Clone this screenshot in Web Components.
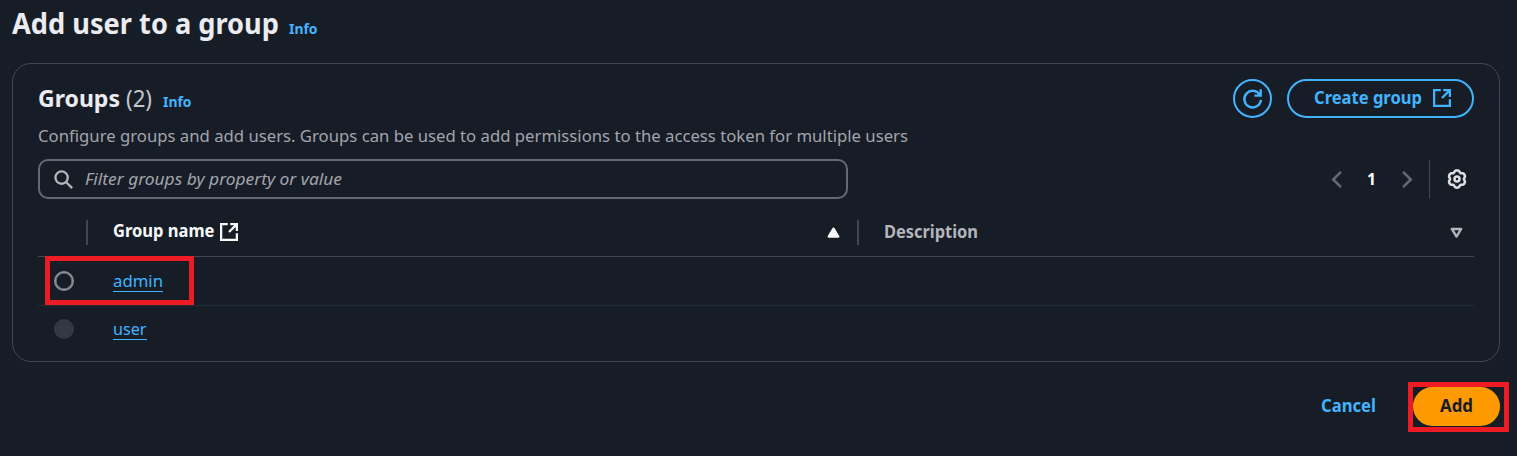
<!DOCTYPE html>
<html lang="en">
<head>
<meta charset="utf-8">
<title>Add user to a group</title>
<style>
html{background:#161d26}
body{margin:0;background:#161d26;color:#ebebf0;font-family:"Noto Sans","Open Sans",sans-serif;font-size:17px;line-height:24px;height:456px;overflow:hidden}
</style>
</head>
<body>
<group-page></group-page>
<script>
const define = (name, html, setup) => customElements.define(name, class extends HTMLElement {
  constructor() {
    super();
    const t = document.createElement('template');
    t.innerHTML = html;
    this.attachShadow({ mode: 'open' }).append(t.content.cloneNode(true));
  }
  connectedCallback() { if (setup) setup(this, this.shadowRoot); }
});

/* A single line of text set to a fixed measure. */
define('ui-text', `<style>
:host{display:block;flex:none;white-space:nowrap;overflow:visible}
span{display:inline-block;transform-origin:0 50%;vertical-align:top}
</style><span><slot></slot></span>`, (el, root) => {
  const w = parseFloat(el.getAttribute('w'));
  const span = root.querySelector('span');
  el.style.width = w + 'px';
  requestAnimationFrame(() => {
    const n = span.offsetWidth;
    if (n) span.style.transform = 'scaleX(' + w / span.getBoundingClientRect().width + ')';
  });
});

/* Six-lobed outline of the settings wheel. */
const wheel = Array.from({ length: 72 }, (_, i) => {
  const a = i * Math.PI / 36, r = 6.35 + 0.7 * Math.cos(6 * a) - 0.15 * Math.cos(12 * a);
  return (8 + r * Math.sin(a)).toFixed(2) + ' ' + (8 - r * Math.cos(a)).toFixed(2);
}).join('L');

const ICONS = {
  external: '<path d="M6.9 1H1v14h14V9.2M9.1 1H15v6M14.8 1.2 8 8"/>',
  refresh: '<path d="M14.9.2v5.4H9.6M14.4 5.4A7 7 0 1 0 15.1 9.2"/>',
  search: '<circle cx="6.4" cy="6.4" r="5.2"/><path d="m10.3 10.3 5 5"/>',
  left: '<path d="M12.2.8 4.9 8l7.3 7.2" stroke-width="2.4"/>',
  right: '<path d="M3.8.8 11.1 8l-7.3 7.2" stroke-width="2.4"/>',
  gear: '<path d="M' + wheel + 'Z"/><circle cx="8" cy="8" r="2"/>',
  up: '<path d="M8 4.8 12 11.4H4z" fill="currentColor" stroke-linejoin="round"/>',
  down: '<path d="M8 11.4 12 5H4z" stroke-linejoin="round"/>'
};
define('ui-icon', `<style>
:host{display:block;flex:none;width:19px;height:19px}
svg{display:block;width:100%;height:100%;overflow:visible;fill:none;stroke:currentColor;stroke-width:2;stroke-linejoin:miter}
</style><svg viewBox="0 0 16 16"></svg>`, (el, root) => {
  root.querySelector('svg').innerHTML = ICONS[el.getAttribute('name')];
});

define('ui-button', `<style>
:host{display:flex;box-sizing:border-box;flex:none;height:39px;align-items:center;border:2px solid #42b4ff;border-radius:20px;color:#42b4ff;font-weight:700;padding-bottom:1px}
:host([variant=link]){border-color:transparent}
:host([variant=primary]){background:#ff9900;border-color:#ff9900;color:#161d26}
ui-text,::slotted(ui-text){margin-bottom:1px}
</style><slot></slot>`);

define('info-link', `<style>
:host{display:block;flex:none;color:#42b4ff;font-size:14.4px;font-weight:700}
</style><ui-text w="28.5">Info</ui-text>`);

define('ui-highlight', `<style>
:host{position:absolute;box-sizing:border-box;border:5px solid #ed1c24;pointer-events:none}
</style>`);

define('page-header', `<style>
:host{display:flex;height:63px;padding-left:12px;box-sizing:border-box}
.h{font-size:29px;font-weight:700;line-height:46px}
info-link{margin:17px 0 0 10px}
</style><ui-text class="h" w="267" role="heading">Add user to a group</ui-text><info-link></info-link>`);

define('panel-header', `<style>
:host{display:block}
.top{display:flex;height:39px;align-items:center}
.t{font-size:24px;font-weight:700;color:#ebebf0;margin-bottom:2px}
.c{font-size:24px;color:#c6c6cd;margin:0 0 2px 6px}
info-link{margin:6px 0 0 10.5px}
.spacer{flex:1}
.round{width:39px;justify-content:center;margin-right:15px}
.create{width:187px;padding-left:25px;gap:11px}
.create ui-icon{width:18px;height:18px}
.d{color:#a4a4ad;margin-top:6px}
</style>
<div class="top"><ui-text class="t" w="82">Groups</ui-text><ui-text class="c" w="26">(2)</ui-text><info-link></info-link><div class="spacer"></div>
<ui-button class="round"><ui-icon name="refresh"></ui-icon></ui-button>
<ui-button class="create"><ui-text w="108">Create group</ui-text><ui-icon name="external"></ui-icon></ui-button></div>
<ui-text class="d" w="870">Configure groups and add users. Groups can be used to add permissions to the access token for multiple users</ui-text>`);

define('filter-bar', `<style>
:host{display:flex;height:40px;margin-top:11px;align-items:center}
.box{box-sizing:border-box;width:810px;height:40px;border:2px solid #656871;border-radius:10px;display:flex;align-items:center;padding-left:14px;color:#b4b4bb}
.box ui-text{margin-left:12px;font-style:italic;color:#a4a4ad}
.spacer{flex:1}
.pg{color:#656871;width:17px;height:17px}
.n{font-weight:700;color:#fff;margin:0 23px 0 22px;font-size:16.8px}
.rule{width:1px;height:39px;background:#424650;margin:0 17px 0 13px}
.gear{width:20px;height:20px;color:#dedee3;margin-right:7px}
</style>
<div class="box"><ui-icon name="search"></ui-icon><ui-text w="257">Filter groups by property or value</ui-text></div>
<div class="spacer"></div>
<ui-icon class="pg" name="left"></ui-icon><ui-text class="n" w="9">1</ui-text><ui-icon class="pg" name="right"></ui-icon>
<div class="rule"></div><ui-icon class="gear" name="gear"></ui-icon>`);

define('group-table', `<style>
:host{display:block}
.grid{display:grid;grid-template-columns:48px 771px 617px;align-items:center;box-sizing:border-box}
.head{height:58px;border-bottom:1px solid #424650;font-weight:700;padding-top:9px}
.cell{display:flex;align-items:center;height:25px;box-sizing:border-box;border-left:2px solid #424650;padding-left:25px}
.cell.d{color:#b4b4bb}
.cell.n{color:#f9f9fa}
.cell .ext{margin-left:5px;width:18px;height:18px}
.sort{margin-left:auto;width:19px;height:19px}
.n .sort{margin-right:14px}.d .sort{margin-right:8px}
.n ui-text{margin-bottom:2px}
.row{height:49px;border-bottom:1px solid #232b37;position:relative}
.row:last-child{border:0;height:46px}
.radio{width:20px;height:20px;box-sizing:border-box;border:2px solid #8c8c94;box-shadow:inset 0 0 0 .5px #8c8c94;border-radius:50%;margin-left:16px}
.radio.off{background:#333843;border-color:#333843;box-shadow:none}
.link{color:#42b4ff;margin:0 0 1px 27px;border-bottom:1px solid #42b4ff;height:22px;line-height:23px}
ui-highlight{left:7px;top:-1px;width:149px;height:49px}
</style>
<div class="grid head"><span></span>
<div class="cell n"><ui-text w="101.5">Group name</ui-text><ui-icon class="ext" name="external"></ui-icon><ui-icon class="sort" name="up"></ui-icon></div>
<div class="cell d"><ui-text w="94">Description</ui-text><ui-icon class="sort" name="down"></ui-icon></div></div>
<div class="grid row"><div class="radio"></div><ui-text class="link" w="50">admin</ui-text><ui-highlight></ui-highlight></div>
<div class="grid row"><div class="radio off"></div><ui-text class="link" w="33.5">user</ui-text></div>`);

define('group-panel', `<style>
:host{display:block;box-sizing:border-box;margin:0 17px 0 12px;height:299px;border:1px solid #424650;border-radius:19px;padding:15px 25px 0}
</style><panel-header></panel-header><filter-bar></filter-bar><group-table></group-table>`);

define('page-actions', `<style>
:host{display:flex;justify-content:flex-end;padding:25px 17px 0 0}
.cancel{padding:0 35px 1px 0}
.add{width:87px;padding-left:25px;position:relative}
ui-highlight{left:-7px;top:-7px;width:101px;height:50px}
</style>
<ui-button class="cancel" variant="link"><ui-text w="55">Cancel</ui-text></ui-button>
<ui-button class="add" variant="primary"><ui-text w="33">Add</ui-text><ui-highlight></ui-highlight></ui-button>`);

define('group-page', `<style>
:host{display:block}
</style><page-header></page-header><group-panel></group-panel><page-actions></page-actions>`);
</script>
</body>
</html>
